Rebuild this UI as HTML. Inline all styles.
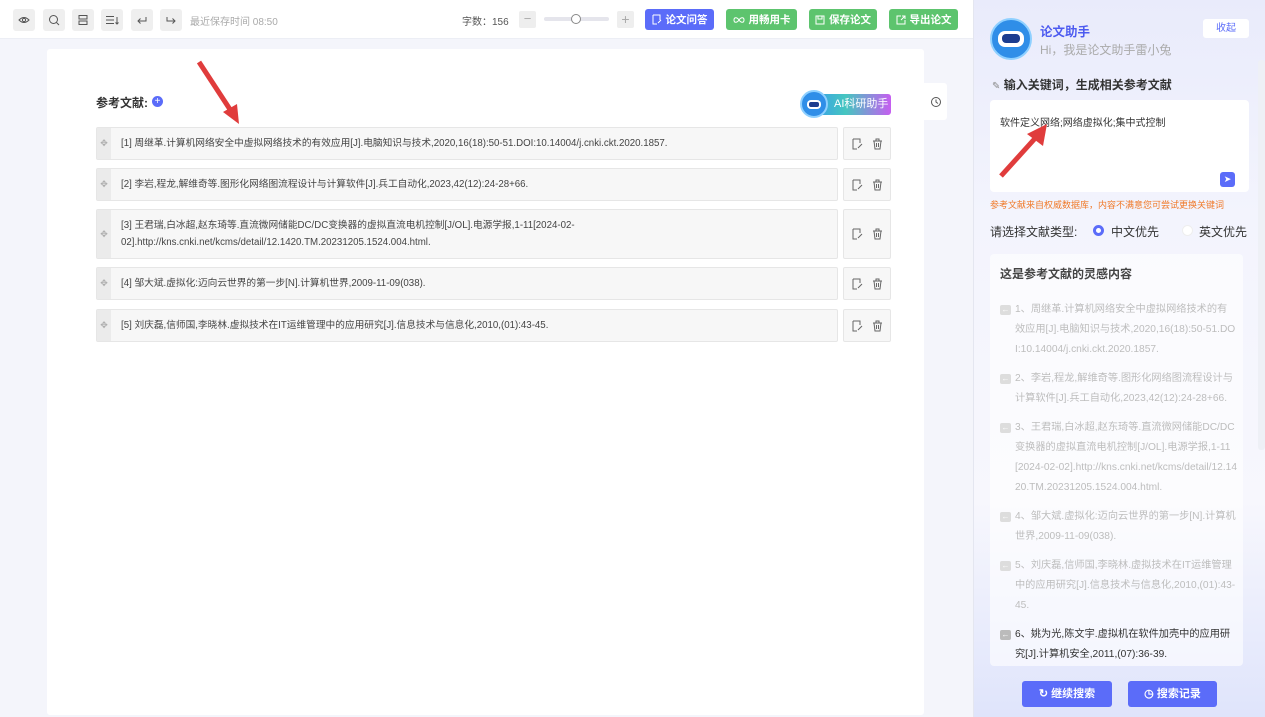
<!DOCTYPE html>
<html><head><meta charset="utf-8"><style>
*{margin:0;padding:0;box-sizing:border-box}
body{width:1265px;height:717px;overflow:hidden;background:#f4f5fb;font-family:"Liberation Sans","Noto Sans CJK SC",sans-serif;position:relative;color:#333}
.abs{position:absolute}
.top{left:0;top:0;width:973px;height:39px;background:#fff;border-bottom:1px solid #eceef5}
.tb{top:9px;width:22px;height:22px;background:#efefef;border-radius:3px;display:flex;align-items:center;justify-content:center}
.btn{top:9px;height:21px;border-radius:3px;color:#fff;font-size:10.5px;font-weight:bold;display:flex;align-items:center;justify-content:center;gap:4px}
.card{left:47px;top:49px;width:877px;height:666px;background:#fff;border-radius:3px}
.row{left:96px;width:742px;background:#f7f7f7;border:1px solid #e6e6e6;border-radius:2px;font-size:9.7px;color:#444;line-height:17px;padding:7px 10px 7px 24px;display:flex;align-items:center}
.row .h{position:absolute;left:0;top:0;bottom:0;width:14px;background:#ebebeb;color:#aaa;font-size:9px;display:flex;align-items:center;justify-content:center}
.act{left:843px;width:48px;background:#f7f7f7;border:1px solid #e6e6e6;border-radius:2px;display:flex;align-items:center;justify-content:center;gap:9px}
.rp{left:973px;top:0;width:292px;height:717px;background:linear-gradient(180deg,#e9ebfb 0%,#f3f4fd 30%,#f7f7fd 70%,#dfe4fb 100%);border-left:1px solid #e4e6f0}
.it{font-size:10.2px;color:#bdbdbd;line-height:20px;padding-left:15px;position:relative;margin-bottom:9px;margin-right:-4px;word-break:break-all}
.it i{position:absolute;left:0;top:5px;width:11px;height:10px;background:#ddd;border-radius:2px;color:#fff;font-size:8px;line-height:10px;text-align:center;font-style:normal}
</style></head><body>
<div class="abs top"></div>
<div class="abs tb" style="left:13px"><svg width="12" height="12" viewBox="0 0 12 12"><path d="M1 6Q6 1 11 6Q6 11 1 6Z" fill="none" stroke="#555"/><circle cx="6" cy="6" r="1.6" fill="none" stroke="#555"/></svg></div>
<div class="abs tb" style="left:43px"><svg width="12" height="12"><circle cx="5.5" cy="5.5" r="4" fill="none" stroke="#555"/><path d="M8.5 8.5L11 11" stroke="#555"/></svg></div>
<div class="abs tb" style="left:72px"><svg width="12" height="12"><rect x="2" y="1.5" width="8" height="3.5" fill="none" stroke="#555"/><rect x="2" y="7" width="8" height="3.5" fill="none" stroke="#555"/></svg></div>
<div class="abs tb" style="left:101px"><svg width="14" height="12"><path d="M1 2.5H9M1 6H9M1 9.5H9M12 3V10M10.5 8.5L12 10L13.5 8.5" stroke="#555" fill="none"/></svg></div>
<div class="abs tb" style="left:131px"><svg width="12" height="12"><path d="M10 3V7H2M4.5 4.5L2 7L4.5 9.5" stroke="#555" fill="none"/></svg></div>
<div class="abs tb" style="left:160px"><svg width="12" height="12"><path d="M2 3V7H10M7.5 4.5L10 7L7.5 9.5" stroke="#555" fill="none"/></svg></div>
<div class="abs" style="left:190px;top:13px;font-size:10px;color:#aaa">最近保存时间 08:50</div>
<div class="abs" style="left:462px;top:13px;font-size:10px;color:#555">字数：156</div>
<div class="abs" style="left:519px;top:11px;width:17px;height:17px;background:#eee;border-radius:2px;color:#aaa;font-size:13px;line-height:16px;text-align:center">−</div>
<div class="abs" style="left:544px;top:17px;width:65px;height:4px;background:#e5e5ec;border-radius:2px"></div>
<div class="abs" style="left:571px;top:14px;width:10px;height:10px;background:#fff;border:1px solid #888;border-radius:50%"></div>
<div class="abs" style="left:617px;top:11px;width:17px;height:17px;background:#eee;border-radius:2px;color:#aaa;font-size:14px;line-height:16px;text-align:center">+</div>
<div class="abs btn" style="left:645px;width:69px;background:#5b6cf9"><svg width="10" height="11"><path d="M1 1H8V6M1 1V10H5M6 9L9 6" stroke="#fff" fill="none"/></svg>论文问答</div>
<div class="abs btn" style="left:726px;width:71px;background:#5dc46e"><svg width="12" height="8"><path d="M6 4C4 1 1 1 1 4S4 7 6 4S11 1 11 4S8 7 6 4" stroke="#fff" fill="none"/></svg>用畅用卡</div>
<div class="abs btn" style="left:809px;width:68px;background:#5dc46e"><svg width="10" height="10"><rect x="1" y="1" width="8" height="8" stroke="#fff" fill="none"/><path d="M3 1V4H7V1" stroke="#fff" fill="none"/></svg>保存论文</div>
<div class="abs btn" style="left:889px;width:69px;background:#5dc46e"><svg width="10" height="10"><path d="M5 1H1V9H9V5M6 1H9V4M9 1L5 5" stroke="#fff" fill="none"/></svg>导出论文</div>

<div class="abs card"></div>
<svg class="abs" style="left:195px;top:60px" width="48" height="66"><path d="M4 2L38 54" stroke="#e03c3c" stroke-width="5"/><path d="M28 52L44 64L42 44Z" fill="#e03c3c"/></svg>
<div class="abs" style="left:96px;top:94px;font-size:12px;font-weight:bold;color:#333">参考文献:</div>
<div class="abs" style="left:152px;top:96px;width:11px;height:11px;border-radius:50%;background:#5b6cf9;color:#fff;font-size:10px;line-height:11px;text-align:center">+</div>
<div class="abs" style="left:815px;top:94px;width:76px;height:21px;border-radius:3px;background:linear-gradient(90deg,#3aa0e8,#45c6c0 40%,#c65ef0);color:#fff;font-size:11px;line-height:21px;padding-left:19px">AI科研助手</div>
<div class="abs" style="left:800px;top:90px;width:28px;height:28px;border-radius:50%;background:#2f8ee8;border:2px solid #8fd0ff"><div style="position:absolute;left:5px;top:8px;width:14px;height:9px;background:#fff;border-radius:4px"></div><div style="position:absolute;left:7px;top:10px;width:10px;height:5px;background:#1c3d8f;border-radius:2px"></div></div>
<div class="abs" style="left:924px;top:83px;width:23px;height:37px;background:#fff;border-radius:0 3px 3px 0;display:flex;align-items:center;justify-content:center"><svg width="12" height="12"><circle cx="6" cy="6" r="4.5" fill="none" stroke="#555"/><path d="M6 3.5V6L8 7.5" stroke="#555" fill="none"/></svg></div>

<div class="abs row" style="top:127px;height:33px"><span class="h">✥</span>[1] 周继革.计算机网络安全中虚拟网络技术的有效应用[J].电脑知识与技术,2020,16(18):50-51.DOI:10.14004/j.cnki.ckt.2020.1857.</div>
<div class="abs row" style="top:168px;height:33px"><span class="h">✥</span>[2] 李岩,程龙,解维奇等.图形化网络图流程设计与计算软件[J].兵工自动化,2023,42(12):24-28+66.</div>
<div class="abs row" style="top:209px;height:50px"><span class="h">✥</span>[3] 王君瑞,白冰超,赵东琦等.直流微网储能DC/DC变换器的虚拟直流电机控制[J/OL].电源学报,1-11[2024-02-<br>02].http://kns.cnki.net/kcms/detail/12.1420.TM.20231205.1524.004.html.</div>
<div class="abs row" style="top:267px;height:33px"><span class="h">✥</span>[4] 邹大斌.虚拟化:迈向云世界的第一步[N].计算机世界,2009-11-09(038).</div>
<div class="abs row" style="top:309px;height:33px"><span class="h">✥</span>[5] 刘庆磊,信师国,李晓林.虚拟技术在IT运维管理中的应用研究[J].信息技术与信息化,2010,(01):43-45.</div>
<div class="abs act" style="top:127px;height:33px"><svg width="11" height="12"><path d="M1 1H8V5M1 1V11H5M6 10L10 6" stroke="#666" fill="none"/></svg><svg width="11" height="12"><path d="M1 3H10M4 3V1H7V3M2 3L3 11H8L9 3M4.5 5V9M6.5 5V9" stroke="#666" fill="none"/></svg></div>
<div class="abs act" style="top:168px;height:33px"><svg width="11" height="12"><path d="M1 1H8V5M1 1V11H5M6 10L10 6" stroke="#666" fill="none"/></svg><svg width="11" height="12"><path d="M1 3H10M4 3V1H7V3M2 3L3 11H8L9 3M4.5 5V9M6.5 5V9" stroke="#666" fill="none"/></svg></div>
<div class="abs act" style="top:209px;height:50px"><svg width="11" height="12"><path d="M1 1H8V5M1 1V11H5M6 10L10 6" stroke="#666" fill="none"/></svg><svg width="11" height="12"><path d="M1 3H10M4 3V1H7V3M2 3L3 11H8L9 3M4.5 5V9M6.5 5V9" stroke="#666" fill="none"/></svg></div>
<div class="abs act" style="top:267px;height:33px"><svg width="11" height="12"><path d="M1 1H8V5M1 1V11H5M6 10L10 6" stroke="#666" fill="none"/></svg><svg width="11" height="12"><path d="M1 3H10M4 3V1H7V3M2 3L3 11H8L9 3M4.5 5V9M6.5 5V9" stroke="#666" fill="none"/></svg></div>
<div class="abs act" style="top:309px;height:33px"><svg width="11" height="12"><path d="M1 1H8V5M1 1V11H5M6 10L10 6" stroke="#666" fill="none"/></svg><svg width="11" height="12"><path d="M1 3H10M4 3V1H7V3M2 3L3 11H8L9 3M4.5 5V9M6.5 5V9" stroke="#666" fill="none"/></svg></div>

<div class="abs rp"></div>
<div class="abs" style="left:1258px;top:60px;width:7px;height:390px;background:#eef0f6;border-radius:3px"></div>
<div class="abs" style="left:990px;top:18px;width:42px;height:42px;border-radius:50%;background:#2f8ee8;border:2px solid #8fd0ff"><div style="position:absolute;left:6px;top:11px;width:26px;height:16px;background:#fff;border-radius:7px"></div><div style="position:absolute;left:10px;top:14px;width:18px;height:9px;background:#1c3d8f;border-radius:4px"></div></div>
<div class="abs" style="left:1040px;top:21px;font-size:12.5px;font-weight:bold;color:#4d5bf0">论文助手</div>
<div class="abs" style="left:1040px;top:41px;font-size:12px;color:#aaa">Hi，我是论文助手雷小兔</div>
<div class="abs" style="left:1203px;top:19px;width:46px;height:19px;background:#fff;border-radius:3px;font-size:10px;color:#5b6cf9;text-align:center;line-height:19px">收起</div>
<div class="abs" style="left:992px;top:76px;font-size:12px;font-weight:bold;color:#333"><span style="color:#888;font-weight:normal;font-size:10px">✎</span> 输入关键词，生成相关参考文献</div>
<div class="abs" style="left:990px;top:100px;width:259px;height:92px;background:#fff;border-radius:4px;font-size:10px;color:#333;padding:14px 10px">软件定义网络;网络虚拟化;集中式控制</div>
<svg class="abs" style="left:997px;top:122px" width="52" height="58"><path d="M4 54L42 12" stroke="#e03c3c" stroke-width="5"/><path d="M30 12L50 2L46 24Z" fill="#e03c3c"/></svg>
<div class="abs" style="left:1220px;top:172px;width:15px;height:15px;background:#5b6cf9;border-radius:3px;color:#fff;font-size:9px;text-align:center;line-height:15px">➤</div>
<div class="abs" style="left:990px;top:198px;font-size:9px;color:#f07a2a">参考文献来自权威数据库，内容不满意您可尝试更换关键词</div>
<div class="abs" style="left:990px;top:223px;font-size:12px;color:#333">请选择文献类型:</div>
<div class="abs" style="left:1093px;top:225px;width:11px;height:11px;border-radius:50%;border:3px solid #5b6cf9;background:#fff"></div>
<div class="abs" style="left:1111px;top:223px;font-size:12px;color:#333">中文优先</div>
<div class="abs" style="left:1182px;top:225px;width:11px;height:11px;border-radius:50%;background:#fff;border:1px solid #eee"></div>
<div class="abs" style="left:1199px;top:223px;font-size:12px;color:#333">英文优先</div>
<div class="abs" style="left:990px;top:254px;width:253px;height:412px;background:rgba(255,255,255,.6);border-radius:4px;overflow:hidden;padding:11px 10px">
<div style="font-size:12px;font-weight:bold;color:#444;margin-bottom:18px">这是参考文献的灵感内容</div>
<div class="it"><i>←</i>1、周继革.计算机网络安全中虚拟网络技术的有效应用[J].电脑知识与技术,2020,16(18):50-51.DOI:10.14004/j.cnki.ckt.2020.1857.</div>
<div class="it"><i>←</i>2、李岩,程龙,解维奇等.图形化网络图流程设计与计算软件[J].兵工自动化,2023,42(12):24-28+66.</div>
<div class="it"><i>←</i>3、王君瑞,白冰超,赵东琦等.直流微网储能DC/DC变换器的虚拟直流电机控制[J/OL].电源学报,1-11[2024-02-02].http://kns.cnki.net/kcms/detail/12.1420.TM.20231205.1524.004.html.</div>
<div class="it"><i>←</i>4、邹大斌.虚拟化:迈向云世界的第一步[N].计算机世界,2009-11-09(038).</div>
<div class="it"><i>←</i>5、刘庆磊,信师国,李晓林.虚拟技术在IT运维管理中的应用研究[J].信息技术与信息化,2010,(01):43-45.</div>
<div class="it" style="color:#333"><i style="background:#bbb">←</i>6、姚为光,陈文宇.虚拟机在软件加壳中的应用研究[J].计算机安全,2011,(07):36-39.</div>
<div class="it" style="color:#333"><i style="background:#bbb">←</i>7、徐敏,赵巧娣.虚拟直流电机荷电状态均衡控制[J].</div>
</div>
<div class="abs" style="left:1022px;top:681px;width:90px;height:26px;background:#5b6cf9;border-radius:3px;color:#fff;font-size:11px;font-weight:bold;text-align:center;line-height:26px">↻ 继续搜索</div>
<div class="abs" style="left:1128px;top:681px;width:89px;height:26px;background:#5b6cf9;border-radius:3px;color:#fff;font-size:11px;font-weight:bold;text-align:center;line-height:26px">◷ 搜索记录</div>
</body></html>
